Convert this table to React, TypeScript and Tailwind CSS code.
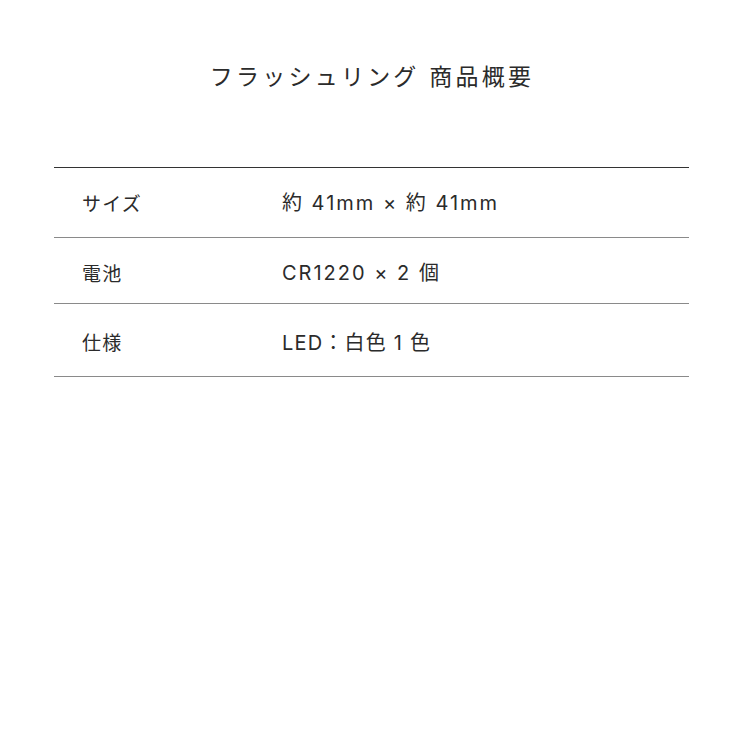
import React from 'react';

const rows = [
  { label: 'サイズ', value: '約 41mm × 約 41mm', h: 'h-[70px]', pt: 'pt-[1px]', tr: 'tracking-[0.1em]' },
  { label: '電池', value: 'CR1220 × 2 個', h: 'h-[66px]', pt: 'pt-[5px]', tr: 'tracking-[0.1em]' },
  { label: '仕様', value: 'LED：白色 1 色', h: 'h-[73px]', pt: 'pt-[5px]', tr: 'tracking-[0.06em]' },
];

const App: React.FC = () => {
  return (
    <div className="w-[750px] h-[750px] bg-white text-[#2b2b2b] font-['Noto_Sans_CJK_JP','Noto_Sans',sans-serif]">
      <h1 className="pt-[61px] pr-[6px] text-center text-[23px] leading-[32px] tracking-[0.14em] font-['Inter','Noto_Sans_CJK_JP',sans-serif]">
        フラッシュリング 商品概要
      </h1>
      <div className="ml-[54px] w-[635px] mt-[74px] border-t border-[#333]">
        {rows.map((r) => (
          <div key={r.label} className={`flex items-center border-b border-[#8a8a8a] ${r.h} ${r.pt}`}>
            <div className="w-[228px] pl-[28px] text-[19px] tracking-[0.06em]">{r.label}</div>
            <div className={`text-[20px] ${r.tr} font-['Inter','Noto_Sans_CJK_JP',sans-serif]`}>{r.value}</div>
          </div>
        ))}
      </div>
    </div>
  );
};

export default App;
